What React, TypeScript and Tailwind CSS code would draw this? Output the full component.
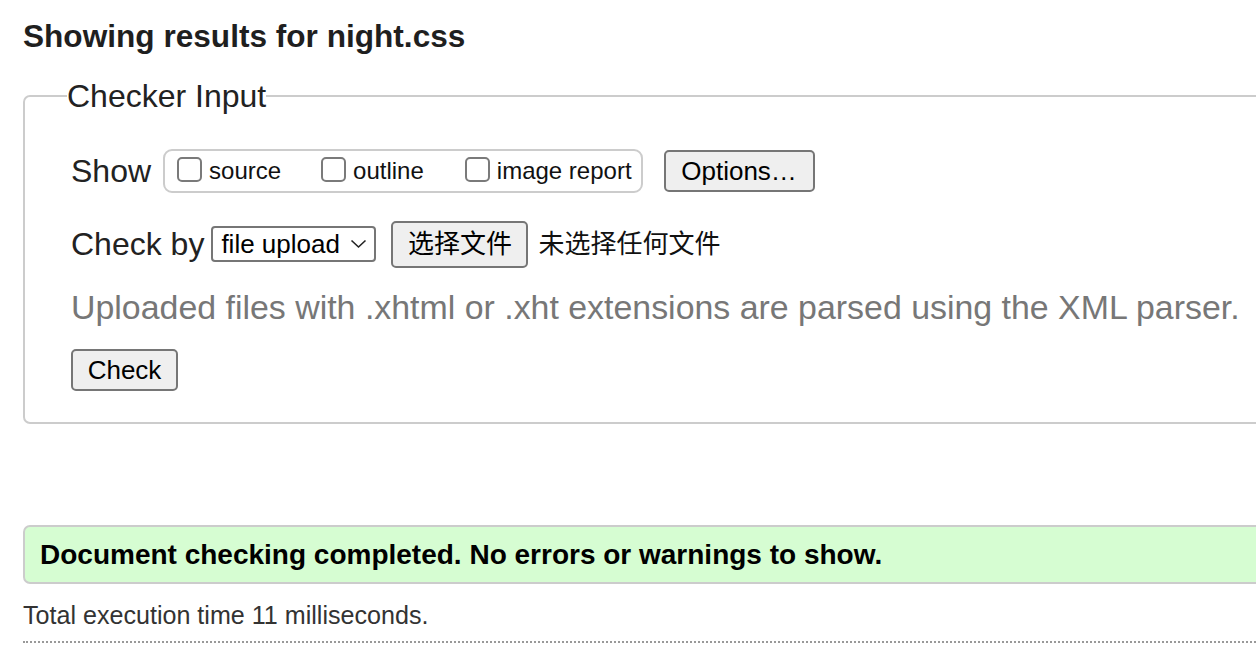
import React from "react";

const Checkbox: React.FC<{ label: string; className?: string }> = ({ label, className }) => (
    <label className={`flex items-center ${className ?? ""}`}>
        <input
            type="checkbox"
            className="appearance-none w-[25px] h-[25px] border-2 border-[#7a7a7a] rounded-[5px] bg-white -mt-[4px]"
        />
        <span className="ml-[7px] text-[24px] leading-[30px] text-[#111]">{label}</span>
    </label>
);

const App: React.FC = () => {
    return (
        <div
            className="w-[1256px] h-[666px] overflow-hidden bg-white text-[#222]"
            style={{ fontFamily: '"Liberation Sans", Arial, "Noto Sans CJK SC", sans-serif' }}
        >
            <div className="w-[1320px] pl-[23px]">
                <h2 className="pt-[18px] text-[31.6px] leading-[36px] font-bold text-[#1f1f1f]">
                    Showing results for night.css
                </h2>

                <fieldset className="mt-[24px] border-2 border-[#cccccc] rounded-[7px] pl-[46px] pr-4 pt-[33px] pb-[31px]">
                    <legend className="-ml-[4px] text-[32px] leading-[36px] text-[#222]">Checker Input</legend>

                    {/* show options */}
                    <div className="flex items-center h-[48px]">
                        <span className="text-[32px] leading-[36px]">Show</span>
                        <div className="ml-[12px] flex items-center h-[44px] border-2 border-[#cccccc] rounded-[9px] pl-[12px] pr-[9px]">
                            <Checkbox label="source" />
                            <Checkbox label="outline" className="ml-[40px]" />
                            <Checkbox label="image report" className="ml-[41px]" />
                        </div>
                        <button
                            type="button"
                            className="ml-[21px] h-[42px] w-[151px] border-2 border-[#767676] rounded-[5px] bg-[#efefef] text-[26px] text-black"
                        >
                            Options…
                        </button>
                    </div>

                    {/* check by */}
                    <div className="mt-[25px] flex items-center h-[48px]">
                        <span className="text-[32px] leading-[36px]">Check by</span>
                        <div className="relative ml-[7px]">
                            <select className="appearance-none h-[36px] w-[165px] border-2 border-[#767676] rounded-[4px] bg-white pl-[8px] text-[26px] leading-[30px] text-black">
                                <option>file upload</option>
                            </select>
                            <svg
                                className="absolute right-[9px] top-[13px] pointer-events-none"
                                width="17"
                                height="10"
                                viewBox="0 0 17 10"
                                fill="none"
                            >
                                <path d="M1.5 1.5 L8.5 8 L15.5 1.5" stroke="#222" strokeWidth="1.6" />
                            </svg>
                        </div>
                        <button
                            type="button"
                            className="ml-[15px] h-[47px] w-[137px] border-2 border-[#767676] rounded-[5px] bg-[#efefef] text-[26px] text-black"
                        >
                            选择文件
                        </button>
                        <span className="ml-[10px] text-[26px] text-[#111]">未选择任何文件</span>
                    </div>

                    <p className="mt-[19px] text-[33.9px] leading-[40px] text-[#777777] whitespace-nowrap">
                        Uploaded files with .xhtml or .xht extensions are parsed using the XML parser.
                    </p>

                    <button
                        type="button"
                        className="mt-[22px] h-[42px] w-[107px] border-2 border-[#767676] rounded-[5px] bg-[#efefef] text-[26px] text-black"
                    >
                        Check
                    </button>
                </fieldset>

                <div className="mt-[101px] h-[59px] flex items-center border-2 border-[#cccccc] rounded-[7px] bg-[#d6fdd2] pl-[15px]">
                    <span className="text-[28px] font-bold text-black">
                        Document checking completed. No errors or warnings to show.
                    </span>
                </div>

                <p className="mt-[16px] text-[25.1px] leading-[30px] text-[#333]">
                    Total execution time 11 milliseconds.
                </p>

                <div className="mt-[11px] border-t-2 border-dotted border-[#999]" />
            </div>
        </div>
    );
};

export default App;
